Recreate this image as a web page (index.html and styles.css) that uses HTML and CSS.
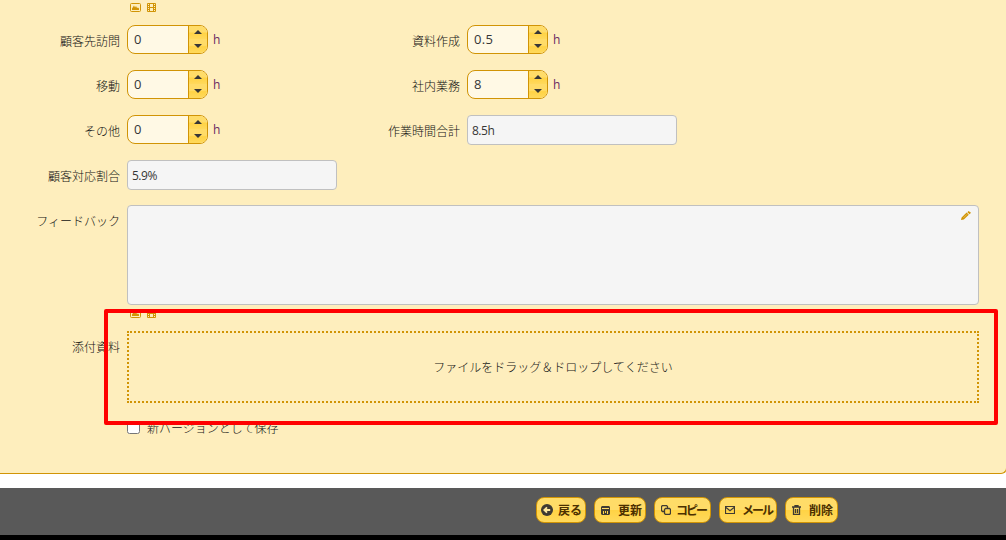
FILE: index.html
```html
<!DOCTYPE html>
<html lang="ja">
<head>
    <meta charset="UTF-8">
    <meta name="viewport" content="width=device-width, initial-scale=1.0">
    <title>日報 - 編集</title>
    <link rel="stylesheet" href="styles.css">
</head>
<body>
    <!-- Shared icons -->
    <svg class="icon-defs" width="0" height="0">
        <symbol id="icon-image" viewBox="0 0 11 9">
            <rect x="0.5" y="0.5" width="10" height="8" rx="1" fill="none" stroke="currentColor"/>
            <path d="M2 7V5.5L4 2.5L5 4.5L6 3L7 5L8 4.5L9 5.5V7Z" fill="currentColor"/>
        </symbol>
        <symbol id="icon-video" viewBox="0 0 9 9">
            <path d="M0.5 0.5H8.5V8.5H0.5ZM2.5 0.5V8.5M6.5 0.5V8.5M2.5 4.5H6.5M0.5 2.5H2.5M0.5 4.5H2.5M0.5 6.5H2.5M6.5 2.5H8.5M6.5 4.5H8.5M6.5 6.5H8.5" fill="none" stroke="currentColor"/>
        </symbol>
    </svg>

    <form class="editor">
        <div class="tools tools-top">
            <svg width="11" height="9"><use href="#icon-image"/></svg>
            <svg width="9" height="9"><use href="#icon-video"/></svg>
        </div>

        <!-- Working hours -->
        <div class="fields">
            <div class="field">
                <label for="visit">顧客先訪問</label>
                <div class="spinner">
                    <input type="text" id="visit" value="0">
                    <span class="spinner-buttons"><i class="up"></i><i class="down"></i></span>
                </div>
                <span class="unit">h</span>
            </div>
            <div class="field">
                <label for="document">資料作成</label>
                <div class="spinner">
                    <input type="text" id="document" value="0.5">
                    <span class="spinner-buttons"><i class="up"></i><i class="down"></i></span>
                </div>
                <span class="unit">h</span>
            </div>
            <div class="field">
                <label for="move">移動</label>
                <div class="spinner">
                    <input type="text" id="move" value="0">
                    <span class="spinner-buttons"><i class="up"></i><i class="down"></i></span>
                </div>
                <span class="unit">h</span>
            </div>
            <div class="field">
                <label for="internal">社内業務</label>
                <div class="spinner">
                    <input type="text" id="internal" value="8">
                    <span class="spinner-buttons"><i class="up"></i><i class="down"></i></span>
                </div>
                <span class="unit">h</span>
            </div>
            <div class="field">
                <label for="other">その他</label>
                <div class="spinner">
                    <input type="text" id="other" value="0">
                    <span class="spinner-buttons"><i class="up"></i><i class="down"></i></span>
                </div>
                <span class="unit">h</span>
            </div>
            <div class="field">
                <label>作業時間合計</label>
                <div class="readonly">8.5h</div>
            </div>
            <div class="field">
                <label>顧客対応割合</label>
                <div class="readonly">5.9%</div>
            </div>
        </div>

        <!-- Feedback -->
        <div class="field feedback">
            <label>フィードバック</label>
            <div class="markdown">
                <svg class="pencil" width="10" height="10" viewBox="0 0 10 10">
                    <path d="M0 9L0.6 6.6L5.6 1.6L7.8 3.8L2.8 8.6ZM6.4 1.2L7.6 0L10 1.8L8.6 3.2Z" fill="currentColor"/>
                    <path d="M2.5 6.8L6 3.3" stroke="#f9e4ae" stroke-width="0.5"/>
                </svg>
            </div>
        </div>
        <div class="tools tools-feedback">
            <svg width="11" height="9"><use href="#icon-image"/></svg>
            <svg width="9" height="9"><use href="#icon-video"/></svg>
        </div>

        <!-- Attachments -->
        <div class="field attachments">
            <label>添付資料</label>
            <div class="dropzone">ファイルをドラッグ＆ドロップしてください</div>
        </div>
        <div class="version">
            <input type="checkbox" id="newVersion">
            <label for="newVersion">新バージョンとして保存</label>
        </div>
        <div class="highlight"></div>
    </form>

    <!-- Commands -->
    <footer class="commands">
        <button type="button" class="back">
            <svg width="12" height="12" viewBox="0 0 12 12"><circle cx="6" cy="6" r="6" fill="#3f3a32"/><path d="M9.2 6H3.8M6 3.3L3.3 6L6 8.7" fill="none" stroke="#ffe9a0" stroke-width="1.8"/></svg>
            <span>戻る</span>
        </button>
        <button type="button" class="update">
            <svg width="9" height="9" viewBox="0 0 9 9"><path fill-rule="evenodd" d="M1 0H8L9 1V8L8 9H1L0 8V1ZM1 2V3H8V2ZM2 5V8H3V5ZM4 5V7H5V5ZM6 5V8H7V5Z" fill="#3f3a32"/></svg>
            <span>更新</span>
        </button>
        <button type="button" class="copy">
            <svg width="10" height="10" viewBox="0 0 10 10"><path d="M3 6.5H1.5L0.5 5.5V1.5L1.5 0.5H5.5L6.5 1.5V3M4.5 3.5H8.5L9.5 4.5V8.5L8.5 9.5H4.5L3.5 8.5V4.5Z" fill="none" stroke="#3f3a32" stroke-width="1.3"/></svg>
            <span>コピー</span>
        </button>
        <button type="button" class="mail">
            <svg width="10" height="8" viewBox="0 0 10 8"><path d="M0.5 0.5H9.5V7.5H0.5ZM1 1.5L5 4.7L9 1.5" fill="none" stroke="#3f3a32" stroke-width="1.2"/></svg>
            <span>メール</span>
        </button>
        <button type="button" class="delete">
            <svg width="9" height="10" viewBox="0 0 9 10"><path d="M0 2H9M3 1.5V0.5H6V1.5M1.5 2V9.5H7.5V2M3.5 4V8M5.5 4V8" fill="none" stroke="#3f3a32" stroke-width="1.3"/></svg>
            <span>削除</span>
        </button>
    </footer>
</body>
</html>
```
FILE: styles.css
```css
* {
    box-sizing: border-box;
}
body {
    margin: 0;
    height: 540px;
    overflow: hidden;
    background-color: #fff;
    color: #363636;
    font-family: "Open Sans", "Noto Sans CJK JP", sans-serif;
    font-size: 12px;
    line-height: 18px;
}
.icon-defs {
    display: block;
}
.editor {
    position: relative;
    width: 1007px;
    height: 474px;
    background-color: #feeebd;
    border-bottom: 1px solid #d19405;
    border-right: 1px solid #d19405;
    border-bottom-right-radius: 6px;
}
.tools {
    display: flex;
    gap: 6px;
    padding-left: 130px;
    color: #d19405;
}
.tools svg {
    display: block;
}
.tools-top {
    height: 25px;
    padding-top: 3px;
}
.tools-feedback {
    height: 26px;
    padding-top: 4px;
}
.fields {
    display: grid;
    grid-template-columns: 340px 340px;
    grid-auto-rows: 45px;
}
.field {
    display: flex;
    align-items: flex-start;
}
.field > label {
    width: 120px;
    margin-right: 7px;
    padding-top: 7px;
    text-align: right;
    white-space: nowrap;
}
.field > label,
.dropzone,
.version label {
    color: #111;
    font-family: "Noto Sans CJK JP", sans-serif;
    font-weight: 300;
}
.spinner {
    display: flex;
    width: 81px;
    height: 29px;
    border: 1px solid #d19405;
    border-radius: 8px;
    background-color: #fff9e5;
    overflow: hidden;
}
.spinner input {
    width: 60px;
    padding: 0 6px 1px;
    border: 0;
    background: none;
    color: #363636;
    font-family: "Open Sans", sans-serif;
    font-size: 13px;
    letter-spacing: 0.3px;
}
.spinner-buttons {
    display: flex;
    flex-direction: column;
    width: 20px;
    border-left: 1px solid #d19405;
}
.spinner-buttons i {
    display: flex;
    align-items: center;
    justify-content: center;
    height: 13px;
    padding-bottom: 1px;
    background: linear-gradient(#ffdc68 0%, #ffdc68 45%, #ffd345 55%, #ffd95c 100%);
}
.spinner-buttons .down {
    height: 14px;
    padding-bottom: 0;
}
.up::before,
.down::before {
    content: "";
    width: 8px;
    height: 4px;
    background-color: #363636;
}
.up::before {
    clip-path: polygon(50% 0, 100% 100%, 0 100%);
}
.down::before {
    clip-path: polygon(0 0, 100% 0, 50% 100%);
}
.unit {
    padding: 6px 0 0 5px;
    color: #6b2a62;
}
.readonly {
    width: 210px;
    height: 30px;
    flex-shrink: 0;
    padding: 6px 4px;
    border: 1px solid #c0c0c0;
    border-radius: 4px;
    background-color: #f5f5f5;
    letter-spacing: -0.5px;
}
.markdown {
    display: flex;
    justify-content: flex-end;
    width: 852px;
    height: 100px;
    padding: 5px 7px;
    border: 1px solid #c0c0c0;
    border-radius: 4px;
    background-color: #f5f5f5;
    color: #d19405;
}
.dropzone {
    display: flex;
    align-items: center;
    justify-content: center;
    width: 852px;
    height: 72px;
    border: 2px dotted #d19405;
}
.version {
    display: flex;
    align-items: flex-start;
    padding: 18px 0 0 127px;
}
.version input {
    width: 13px;
    height: 13px;
    margin: 0 7px 0 0;
}
.version label {
    margin-top: -2px;
}
/* Frame drawn over the attachment area */
.highlight {
    position: absolute;
    left: 104px;
    top: 309px;
    width: 894px;
    height: 116px;
    border: 4px solid #ff0000;
    border-radius: 2px;
}
.commands {
    display: flex;
    gap: 8px;
    height: 52px;
    margin-top: 14px;
    padding: 9px 0 0 536px;
    background-color: #595959;
    border-bottom: 5px solid #000;
}
.commands button {
    display: flex;
    align-items: center;
    justify-content: space-between;
    height: 26px;
    padding: 0 4px 0 5px;
    border: 1px solid #d19405;
    border-radius: 8px;
    background: linear-gradient(#ffdc68 0%, #ffdc68 48%, #ffd345 52%, #ffd95c 100%);
    color: #4c3000;
    font-family: "Noto Sans CJK JP", sans-serif;
    font-size: 12px;
    font-weight: bold;
    line-height: 18px;
    white-space: nowrap;
}
.commands .back {
    width: 50px;
    padding: 0 3px 0 4px;
}
.commands .update {
    width: 52px;
    padding: 0 3px 0 6px;
}
.commands .copy {
    width: 57px;
    padding-left: 6px;
}
.commands .mail {
    width: 58px;
}
.commands .delete {
    width: 53px;
    padding-left: 6px;
}
.commands .copy span,
.commands .mail span {
    letter-spacing: -2px;
}
```
